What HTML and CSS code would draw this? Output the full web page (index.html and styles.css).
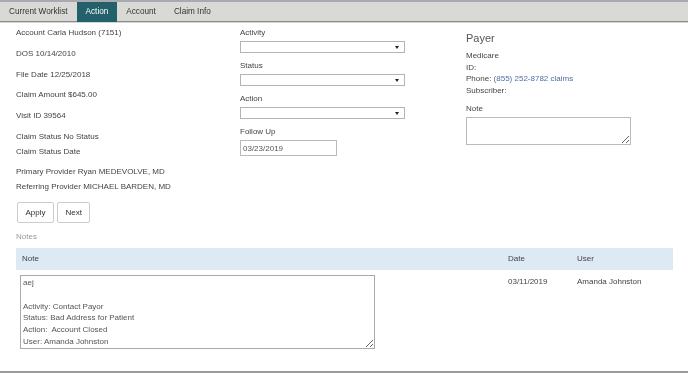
FILE: index.html
```html
<!DOCTYPE html>
<html lang="en">
<head>
    <meta charset="UTF-8">
    <title>Action</title>
    <link rel="stylesheet" href="styles.css">
</head>
<body>
    <div class="page">
        <div class="tabs">
            <a class="tab">Current Worklist</a>
            <a class="tab active">Action</a>
            <a class="tab">Account</a>
            <a class="tab">Claim Info</a>
        </div>

        <div class="columns">
            <div class="col-info">
                <div class="group wide">
                    <p>Account Carla Hudson (7151)</p>
                    <p>DOS 10/14/2010</p>
                    <p>File Date 12/25/2018</p>
                    <p>Claim Amount $645.00</p>
                    <p>Visit ID 39564</p>
                </div>
                <div class="group">
                    <p>Claim Status No Status</p>
                    <p>Claim Status Date</p>
                </div>
                <div class="group">
                    <p>Primary Provider Ryan MEDEVOLVE, MD</p>
                    <p>Referring Provider MICHAEL BARDEN, MD</p>
                </div>
            </div>

            <div class="col-form">
                <label for="activity">Activity</label>
                <span class="select-wrap"><select id="activity"></select></span>
                <label for="status">Status</label>
                <span class="select-wrap"><select id="status"></select></span>
                <label for="action">Action</label>
                <span class="select-wrap"><select id="action"></select></span>
                <label for="followUp">Follow Up</label>
                <input type="text" id="followUp" value="03/23/2019">
            </div>

            <div class="col-payer">
                <h2>Payer</h2>
                <p>Medicare</p>
                <p>ID:</p>
                <p>Phone: <a class="phone">(855) 252-8782 claims</a></p>
                <p>Subscriber:</p>
                <label for="payerNote">Note</label>
                <textarea id="payerNote"></textarea>
            </div>
        </div>

        <div class="buttons">
            <button>Apply</button>
            <button>Next</button>
        </div>

        <div class="notes-title">Notes</div>
        <table class="notes">
            <thead>
                <tr>
                    <th class="c-note">Note</th>
                    <th class="c-date">Date</th>
                    <th>User</th>
                </tr>
            </thead>
            <tbody>
                <tr>
                    <td><textarea class="note-text">aej

Activity: Contact Payor
Status: Bad Address for Patient
Action:  Account Closed
User: Amanda Johnston</textarea></td>
                    <td class="cell-text">03/11/2019</td>
                    <td class="cell-text">Amanda Johnston</td>
                </tr>
            </tbody>
        </table>
    </div>
</body>
</html>
```

FILE: styles.css
```css
body {
    margin: 0;
    font-family: "Liberation Sans", Arial, sans-serif;
    font-size: 8px;
    color: #444;
    background: #fff;
}

.page {
    height: 373px;
    box-sizing: border-box;
    border-top: 2px solid #a9a9b1;
    border-bottom: 2px solid #9a9a9a;
    overflow: hidden;
}

/* tab bar */
.tabs {
    display: flex;
    height: 19px;
    background-color: #d9dad5;
    border-bottom: 1px solid #8b8b8b;
    box-shadow: 0 1px 0 #d4d4d4;
}

.tab {
    padding: 0 9px;
    line-height: 19px;
    font-size: 8.2px;
    color: #333;
}

.tab.active {
    background-color: #23606a;
    color: #fff;
    height: 20px;
}

/* top three columns */
.columns {
    display: grid;
    grid-template-columns: 224px 226px 1fr;
    padding-left: 16px;
}

p {
    margin: 0;
}

.col-info {
    padding-top: 3px;
}

.col-info p {
    line-height: 15px;
}

.group.wide p {
    margin-bottom: 5.8px;
}

.group {
    margin-bottom: 5px;
}

.col-form {
    display: flex;
    flex-direction: column;
    align-items: flex-start;
    padding-top: 5px;
}

.col-form label {
    line-height: 12px;
    margin-bottom: 2px;
}

.select-wrap {
    position: relative;
    display: block;
    margin-bottom: 7px;
}

.select-wrap::after {
    content: "";
    position: absolute;
    right: 6px;
    top: 5px;
    border-left: 2px solid transparent;
    border-right: 2px solid transparent;
    border-top: 3px solid #222;
}

select {
    appearance: none;
    -webkit-appearance: none;
    display: block;
    width: 165px;
    height: 12px;
    margin: 0;
    border: 1px solid #b4b4b4;
    border-radius: 0;
    background: #fff;
}

#followUp {
    width: 97px;
    height: 16px;
    box-sizing: border-box;
    margin: 0;
    padding: 0 2px;
    border: 1px solid #bbb;
    font-family: inherit;
    font-size: 8px;
    color: #555;
}

.col-payer {
    padding-top: 9px;
}

.col-payer h2 {
    margin: 0 0 5px;
    font-size: 11px;
    font-weight: normal;
    line-height: 14px;
    color: #555;
}

.col-payer p {
    line-height: 11.7px;
}

.phone {
    color: #4f6fa6;
}

.col-payer label {
    display: block;
    margin-top: 6px;
    line-height: 12px;
}

.col-payer textarea {
    display: block;
    width: 165px;
    height: 28px;
    box-sizing: border-box;
    margin-top: 2px;
    border: 1px solid #bbb;
    resize: vertical;
}

/* buttons */
.buttons {
    display: flex;
    gap: 3px;
    padding: 0 0 0 17px;
    margin-top: 3px;
}

button {
    height: 21px;
    padding: 0 7.5px;
    background: #fff;
    border: 1px solid #ccc;
    border-radius: 2px;
    font-family: inherit;
    font-size: 8px;
    color: #333;
}

.notes-title {
    margin: 9px 0 0 16px;
    line-height: 10px;
    color: #999;
}

/* notes table */
.notes {
    margin: 6px 15px 0 16px;
    width: 657px;
    border-collapse: collapse;
}

.notes th {
    height: 22px;
    padding: 0 6px;
    background-color: #dde9f3;
    text-align: left;
    font-weight: normal;
    color: #444;
}

.notes th.c-note {
    width: 474px;
}

.notes th.c-date {
    width: 57px;
}

.notes td {
    padding: 5px 4px 0;
    vertical-align: top;
}

.notes td.cell-text {
    padding: 7px 6px 0;
    line-height: 10px;
}

.note-text {
    display: block;
    width: 355px;
    height: 74px;
    box-sizing: border-box;
    margin: 0;
    padding: 1px 2px;
    border: 1px solid #aaa;
    font-family: inherit;
    font-size: 8px;
    line-height: 11.8px;
    color: #555;
    resize: vertical;
}
```
